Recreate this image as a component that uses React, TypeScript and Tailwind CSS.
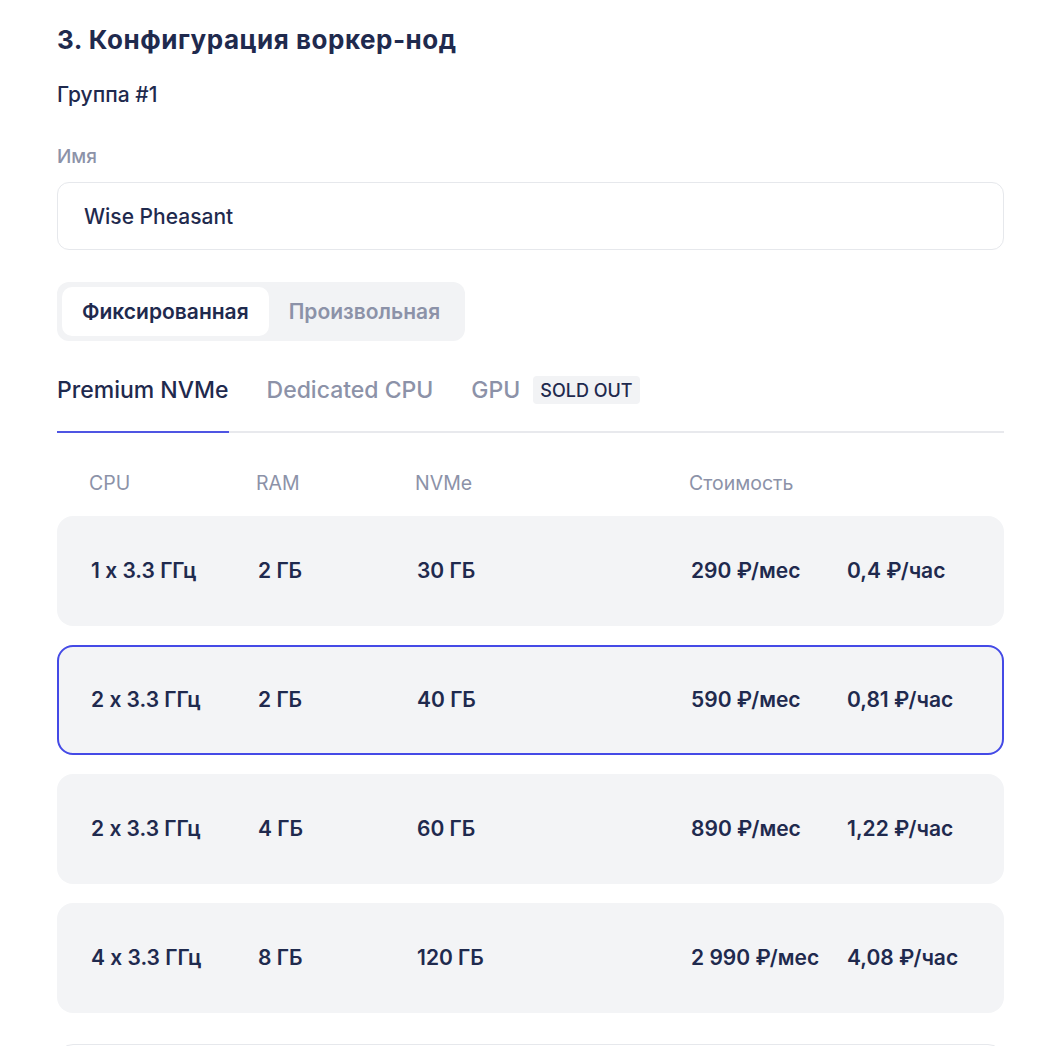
import { useState } from 'react';

interface Plan {
  cpu: string;
  ram: string;
  disk: string;
  month: string;
  hour: string;
}

const plans: Plan[] = [
  { cpu: '1 x 3.3 ГГц', ram: '2 ГБ', disk: '30 ГБ', month: '290 ₽/мес', hour: '0,4 ₽/час' },
  { cpu: '2 x 3.3 ГГц', ram: '2 ГБ', disk: '40 ГБ', month: '590 ₽/мес', hour: '0,81 ₽/час' },
  { cpu: '2 x 3.3 ГГц', ram: '4 ГБ', disk: '60 ГБ', month: '890 ₽/мес', hour: '1,22 ₽/час' },
  { cpu: '4 x 3.3 ГГц', ram: '8 ГБ', disk: '120 ГБ', month: '2 990 ₽/мес', hour: '4,08 ₽/час' },
];

const cols = 'grid grid-cols-[167px_159px_274px_156px_1fr] items-center';

export default function App() {
  const [mode, setMode] = useState<'fixed' | 'custom'>('fixed');
  const [tab, setTab] = useState('nvme');
  const [selected, setSelected] = useState(1);
  const [name, setName] = useState('Wise Pheasant');

  return (
    <div className="min-h-screen bg-white pl-[57px] pr-[40px] pt-6 text-[#1f2a4e] font-['Inter',sans-serif] [font-feature-settings:'calt'_0] overflow-hidden">
      <h2 className="text-[26px] leading-8 font-bold tracking-[0.02em]">3. Конфигурация воркер-нод</h2>

      <div className="mt-[25px] text-[21px] leading-7 font-medium text-[#1f2a4e]">Группа #1</div>

      <label className="block mt-[34px] text-[19px] leading-7 text-[#8c92a8] font-medium">Имя</label>
      <input
        value={name}
        onChange={(e) => setName(e.target.value)}
        className="mt-[11px] w-full h-[68px] px-[26px] rounded-xl border border-[#e6e8ec] text-[21px] font-medium text-[#1f2a4e] outline-none"
      />

      {/* Тип конфигурации */}
      <div className="mt-8 inline-flex p-[5px] rounded-xl bg-[#f2f3f5]">
        <button
          onClick={() => setMode('fixed')}
          className={`h-[49px] px-[20px] rounded-[10px] text-[21px] font-semibold cursor-pointer ${
            mode === 'fixed' ? 'bg-white text-[#1f2a4e]' : 'text-[#8c92a8]'
          }`}
        >
          Фиксированная
        </button>
        <button
          onClick={() => setMode('custom')}
          className={`h-[49px] px-[20px] rounded-[10px] text-[21px] font-semibold cursor-pointer ${
            mode === 'custom' ? 'bg-white text-[#1f2a4e]' : 'text-[#8c92a8]'
          }`}
        >
          Произвольная
        </button>
      </div>

      {/* Вкладки */}
      <div className="mt-[33px] flex gap-[38px] border-b-2 border-[#e8e9ed]">
        <button
          onClick={() => setTab('nvme')}
          className={`-mb-[2px] pb-[25px] border-b-2 text-[23px] leading-8 font-medium cursor-pointer ${
            tab === 'nvme' ? 'border-[#4f55e3] text-[#1f2a4e]' : 'border-transparent text-[#8c92a8]'
          }`}
        >
          Premium NVMe
        </button>
        <button
          onClick={() => setTab('dedicated')}
          className={`-mb-[2px] pb-[25px] border-b-2 text-[23px] leading-8 font-medium cursor-pointer ${
            tab === 'dedicated' ? 'border-[#4f55e3] text-[#1f2a4e]' : 'border-transparent text-[#8c92a8]'
          }`}
        >
          Dedicated CPU
        </button>
        <div className="-mb-[2px] pb-[25px] border-b-2 border-transparent flex items-center gap-[13px]">
          <span className="text-[23px] leading-8 font-medium text-[#8c92a8]">GPU</span>
          <span className="h-[28px] px-[7px] flex items-center rounded bg-[#f2f3f5] text-[18px] font-medium text-[#1f2a4e]">
            SOLD OUT
          </span>
        </div>
      </div>

      {/* Заголовок таблицы */}
      <div className={`${cols} mt-9 px-[32px] text-[19.5px] leading-7 text-[#8c92a8]`}>
        <span>CPU</span>
        <span>RAM</span>
        <span>NVMe</span>
        <span>Стоимость</span>
        <span />
      </div>

      <div className="mt-[19px] flex flex-col gap-[19px]">
        {plans.map((plan, i) => (
          <div
            key={i}
            onClick={() => setSelected(i)}
            className={`${cols} h-[110px] px-[32px] rounded-2xl border-2 bg-[#f3f4f6] text-[21px] font-semibold cursor-pointer ${
              selected === i ? 'border-[#444ae6]' : 'border-transparent'
            }`}
          >
            <span>{plan.cpu}</span>
            <span>{plan.ram}</span>
            <span>{plan.disk}</span>
            <span>{plan.month}</span>
            <span>{plan.hour}</span>
          </div>
        ))}
      </div>

      <div className="mt-[31px] h-16 rounded-2xl border border-[#e6e8ec]" />
    </div>
  );
}
